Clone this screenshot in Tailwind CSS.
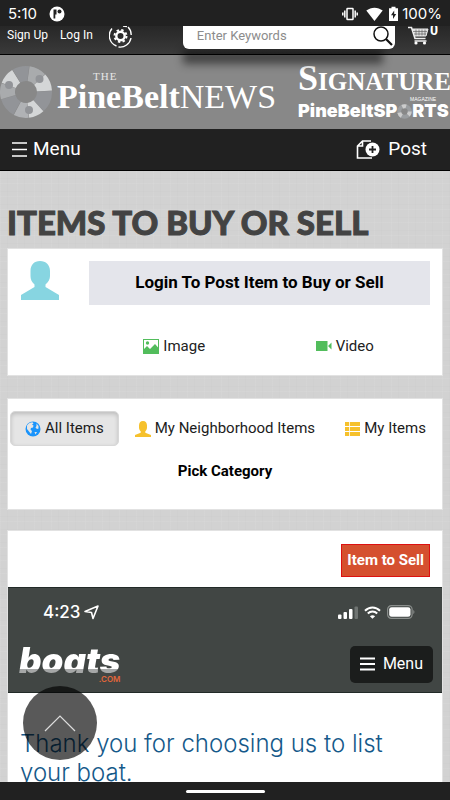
<!DOCTYPE html>
<html lang="en">
<head>
  <meta charset="UTF-8" />
  <meta name="viewport" content="width=device-width, initial-scale=1.0" />
  <title>Items to Buy or Sell</title>
  <script src="https://cdn.jsdelivr.net/npm/@tailwindcss/browser@4"></script>
  <style>
    .linen {
      background-color: #d2d2d2;
      background-image:
        repeating-linear-gradient(0deg, rgba(255, 255, 255, 0.06) 0 1px, transparent 1px 5px, rgba(0, 0, 0, 0.01) 5px 6px, transparent 6px 13px),
        repeating-linear-gradient(90deg, rgba(255, 255, 255, 0.06) 0 1px, transparent 1px 7px, rgba(0, 0, 0, 0.01) 7px 8px, transparent 8px 17px);
    }
  </style>
</head>
<body class="h-screen flex flex-col overflow-hidden bg-[#212121] font-[Roboto,sans-serif] text-black">

  <!-- Status bar -->
  <div class="h-[26px] shrink-0 flex items-center justify-between pl-2 pr-2 pt-[2px] bg-[#212121] text-white text-[15px] font-[Inter,sans-serif] z-20">
    <div class="flex items-center gap-3">
      <span>5:10</span>
      <svg class="w-4 h-4" viewBox="0 0 16 16">
        <circle cx="8" cy="8" r="7.500" fill="#fff" />
        <path d="M4.500 3.500h3v5H6.300v4H4.500z" fill="#212121" />
        <circle cx="10.500" cy="5.500" r="2" fill="#212121" />
      </svg>
    </div>
    <div class="flex items-center">
      <svg class="w-4 h-4 mr-2" viewBox="0 0 16 16" fill="none" stroke="#fff" stroke-width="1.500">
        <rect x="5" y="2.500" width="6" height="11" rx="0.500" />
        <path d="M2.800 4.500v7M13.200 4.500v7M0.800 6.500v3M15.200 6.500v3" />
      </svg>
      <svg class="w-[17px] h-4 mr-[6px]" viewBox="0 0 17 16" fill="#fff"><path d="M8.500 15L0.300 4.600C5 .7 12 .7 16.700 4.600z" /></svg>
      <svg class="w-[9px] h-4 mr-1" viewBox="0 0 9 16">
        <path d="M2.500 0.800h4v1.500H9V15H0V2.300h2.500z" fill="#fff" />
        <path d="M5.200 4.500L2 9.300h2V13l3.200-5H5.200z" fill="#212121" />
      </svg>
      <span>100%</span>
    </div>
  </div>

  <!-- Account bar, partly scrolled away -->
  <header class="h-[29px] shrink-0 flex items-start relative z-10 pl-[7px] border-b border-black bg-linear-to-b from-[#272727] to-[#3a3a3a] text-white text-[12px]">
    <nav class="flex items-start gap-3">
      <a href="#" class="leading-[18px]">Sign Up</a>
      <a href="#" class="leading-[18px]">Log In</a>
      <a href="#" aria-label="Settings" class="ml-1 h-[22px] overflow-hidden">
        <svg class="w-[23px] h-[22px]" viewBox="0 0 23 22" fill="none" stroke="#fff">
          <path d="M7.500 20A11 11 0 0 1 3 2.500M9.500 21A11 11 0 0 0 22 12M22.200 9A11 11 0 0 0 19 1M14 0l4 .500" stroke-width="1.400" />
          <circle cx="11.500" cy="10" r="4.200" stroke-width="2.400" />
          <circle cx="11.500" cy="10" r="6" stroke-width="2" stroke-dasharray="2.360 2.360" />
        </svg>
      </a>
    </nav>
    <form class="relative flex-1 ml-[51px] mr-3">
      <div class="absolute left-0 right-3 top-6 h-3.5 bg-black/50 blur-[4px]"></div>
      <div class="relative h-[23px] flex items-start overflow-hidden bg-white rounded-b-md">
        <input type="text" aria-label="Search" placeholder="Enter Keywords" class="flex-1 min-w-0 h-[19px] pl-[14px] text-[13px] text-black placeholder-[#8c8c8c] outline-none" />
        <button type="button" aria-label="Search" class="pr-0.5">
          <svg class="w-5 h-[21px]" viewBox="0 0 20 21" fill="none" stroke="#111">
            <circle cx="8" cy="8" r="7" stroke-width="1.500" />
            <path d="M13 13l6 6" stroke-width="2.200" />
          </svg>
        </button>
      </div>
    </form>
    <a href="#" aria-label="Cart" class="flex items-start h-5 mr-3 overflow-hidden">
      <svg class="w-[23px] h-[19px]" viewBox="0 0 23 19" fill="none" stroke="#eee">
        <path d="M1 1.500h3.500L8 12.500H18.500M7.500 15h12" stroke-width="1.600" />
        <path d="M5.500 3H21l-2 7H8z" fill="#ddd" stroke-width="1" />
        <path d="M9 3.500v6M12 3.500v6M15 3.500v6M18 3.500v6M6 5.500h14M7 8h12" stroke="#555" stroke-width="0.600" />
        <circle cx="9" cy="17" r="1.600" fill="#fff" stroke="none" />
        <circle cx="17.500" cy="17" r="1.600" fill="#fff" stroke="none" />
      </svg>
      <span class="-mt-0.5 leading-3 text-[14px] font-bold">0</span>
    </a>
  </header>

  <!-- Publications -->
  <div class="h-[74px] shrink-0 flex items-center bg-[#888] text-white overflow-hidden whitespace-nowrap">
    <svg class="w-[52px] h-[54px] shrink-0" viewBox="-26 -27 52 54" fill="none" stroke-width="15">
      <circle r="18.500" pathLength="360" stroke="#a9abad" stroke-dasharray="39 321" transform="rotate(-82)" />
      <circle r="18.500" pathLength="360" stroke="#d4d6d7" stroke-dasharray="39 321" transform="rotate(-42)" />
      <circle r="18.500" pathLength="360" stroke="#929498" stroke-dasharray="49 311" transform="rotate(-2)" />
      <circle r="18.500" pathLength="360" stroke="#d4d6d7" stroke-dasharray="35 325" transform="rotate(48)" />
      <circle r="18.500" pathLength="360" stroke="#b0b2b5" stroke-dasharray="34 326" transform="rotate(84)" />
      <circle r="18.500" pathLength="360" stroke="#929498" stroke-dasharray="44 316" transform="rotate(119)" />
      <circle r="18.500" pathLength="360" stroke="#a9abad" stroke-dasharray="36 324" transform="rotate(164)" />
      <circle r="18.500" pathLength="360" stroke="#d4d6d7" stroke-dasharray="37 323" transform="rotate(201)" />
      <circle r="18.500" pathLength="360" stroke="#929498" stroke-dasharray="38 322" transform="rotate(239)" />
      <g stroke="none">
        <circle cx="13.500" cy="-13" r="4" fill="#929498" />
        <circle cx="3" cy="18" r="4" fill="#929498" />
        <circle cx="-17" cy="-7" r="4" fill="#929498" />
      </g>
    </svg>
    <a href="#" class="shrink-0 ml-[5px] w-[217px] font-['Liberation_Serif',serif]">
      <span class="block pl-9 text-[11px] leading-[10px] tracking-widest text-white/80">THE</span>
      <span class="block text-[34px] leading-8"><b>PineBelt</b>NEWS</span>
    </a>
    <div class="shrink-0 ml-6">
      <a href="#" class="block font-['Liberation_Serif',serif] font-bold">
        <span class="block text-[25px] leading-7"><span class="text-[36px] leading-7">S</span>IGNATURE</span>
        <span class="block pl-28 font-['Liberation_Sans',sans-serif] text-[5px] leading-[6px] font-normal">MAGAZINE</span>
      </a>
      <a href="#" class="flex items-center font-[Inter,sans-serif] font-black text-[18px] leading-[18px]">PineBeltSP
        <svg class="w-[15px] h-[15px]" viewBox="0 0 15 15" fill="none" stroke-width="4">
          <circle cx="7.500" cy="7.500" r="5.300" stroke="#9a9da0" />
          <circle cx="7.500" cy="7.500" r="5.300" stroke="#ccc" stroke-dasharray="4 7" />
        </svg>RTS
      </a>
    </div>
  </div>

  <!-- Main menu -->
  <nav class="h-[42px] shrink-0 flex items-center justify-between pl-3 pr-[23px] bg-[#212121] border-b border-black text-white text-[19px]">
    <button type="button" class="flex items-center gap-1.5">
      <svg class="w-[15px] h-[15px]" viewBox="0 0 15 15" stroke="#fff" stroke-width="1.300"><path d="M0 1h15M0 7.500h15M0 14h15" /></svg>
      Menu
    </button>
    <a href="#" class="flex items-center gap-2">
      <svg class="w-6 h-5" viewBox="0 0 24 20">
        <path d="M15 1H6.500L1.500 6v12h14.500M6.500 1v5H1.500" fill="none" stroke="#fff" stroke-width="1.600" />
        <circle cx="16.500" cy="9.500" r="7" fill="#fff" />
        <path d="M16.500 6v7M13 9.500h7" stroke="#212121" stroke-width="1.800" />
      </svg>
      Post
    </a>
  </nav>

  <main class="linen flex-1 min-h-0 overflow-hidden px-[7px] pt-[31px]">
    <h1 class="font-[Lato,sans-serif] font-black text-[33px] leading-10 mb-[6px] text-[#434343] [-webkit-text-stroke:1px_#434343] whitespace-nowrap">ITEMS TO BUY OR SELL</h1>

    <section class="bg-white border border-[#e2e2e2] pt-3 pb-[19px] pl-[13px] pr-3 mb-[22px]">
      <div class="flex items-start">
        <svg class="w-[38px] h-[39px] shrink-0" viewBox="0 0 38 39" fill="#87d5e1"><path d="M19 0C13 0 9.500 4 9.500 10v5c0 3 1 6 4 8.500v2.500L0 34v5h38v-5l-13.500-8v-2.500c3-2.500 4.500-5.500 4.500-8.500v-5C29 4 25 0 19 0z" /></svg>
        <a href="#" class="ml-[30px] flex-1 h-11 flex items-center justify-center bg-[#e4e5eb] text-[17px] font-bold">Login To Post Item to Buy or Sell</a>
      </div>
      <div class="ml-[68px] mt-[31px] grid grid-cols-2 text-[15px] leading-5">
        <button type="button" class="flex items-center justify-center gap-1 text-[#222]">
          <svg class="w-4 h-[15px]" viewBox="0 0 16 15">
            <rect x="0.500" y="0.500" width="15" height="14" fill="#fff" stroke="#52bd5c" />
            <path d="M1 10l3-3 3 3 5-5 3.500 4v5H1z" fill="#52bd5c" />
            <circle cx="4.500" cy="4" r="1.700" fill="#52bd5c" />
          </svg>
          Image
        </button>
        <button type="button" class="flex items-center justify-center gap-1 text-[#222]">
          <svg class="w-4 h-3" viewBox="0 0 16 12" fill="#52bd5c"><path d="M0 1h11.500v10H0zM12 6l3.500-3.500v7z" /></svg>
          Video
        </button>
      </div>
    </section>

    <section class="bg-white border border-[#e2e2e2] pt-3 pb-7 px-0.5 mb-5">
      <div class="flex justify-between text-[15px] text-[#1c1c1c] whitespace-nowrap">
        <button type="button" class="h-[35px] px-[14px] flex items-center gap-1 rounded-[5px] bg-[#e5e5e5] border border-[#d8d8d8] shadow-[inset_0_2px_4px_rgba(0,0,0,0.18)]">
          <svg class="w-4 h-4" viewBox="0 0 16 16">
            <circle cx="8" cy="8" r="7.500" fill="#1a94fb" />
            <path d="M2 4.500C3.500 2 5.500 1.200 7.500 1.200L8.500 2.500 7 3.500l1.500 1L8 6.500 6 7l-.5 1.500L7 10l-1 3L4 10.500 2 8zM11.500 2.500l2 2.500v2.500l-1.500.5-1.500-1.500 1-1.500zM9.500 11l2.500 0-1.500 2.500z" fill="#e5e5e5" />
          </svg>
          All Items
        </button>
        <button type="button" class="h-[35px] px-[14px] flex items-center gap-1">
          <svg class="w-4 h-4" viewBox="0 0 16 16" fill="#f6c12c"><path d="M8 0C5.300 0 4 2 4 4.500v2c0 1.500.5 2.700 1.700 3.800v1.500L0 14v2h16v-2l-5.700-2.200v-1.500C11.500 9.200 12 8 12 6.500v-2C12 2 10.700 0 8 0z" /></svg>
          My Neighborhood Items
        </button>
        <button type="button" class="h-[35px] px-[14px] flex items-center gap-1">
          <svg class="w-[15px] h-[14px]" viewBox="0 0 15 14" fill="#f6c12c"><path d="M0 0h4.200v4H0zM5 0h10v4H5zM0 5h4.200v4H0zM5 5h10v4H5zM0 10h4.200v4H0zM5 10h10v4H5z" /></svg>
          My Items
        </button>
      </div>
      <h2 class="mt-[15px] text-center text-[15px] leading-5 font-bold">Pick Category</h2>
    </section>

    <article class="bg-white border border-[#e2e2e2]">
      <div class="flex justify-end pt-[13px] pb-[10px] pr-3">
        <a href="#" class="h-[33px] px-[5px] flex items-center bg-[#d5502f] border border-[#dd1111] text-white text-[15px] font-bold">Item to Sell</a>
      </div>
      <div class="h-[106px] flex flex-col justify-between bg-[#414644] border-y border-[#222a28] text-white pl-[11px] pr-[9px] pt-[14px] pb-[9px]">
        <div class="flex items-center justify-between pl-6 pr-[18px] font-[Inter,sans-serif] text-[17px] leading-5 font-medium">
          <div class="flex items-center gap-1">
            <span>4:23</span>
            <svg class="w-[15px] h-[15px]" viewBox="0 0 15 15" fill="none" stroke="#fff" stroke-width="1.600" stroke-linejoin="round"><path d="M14 1L9 13.500 7.500 7.500 1 6.500z" /></svg>
          </div>
          <div class="flex items-center gap-[6px]">
            <svg class="w-5 h-[13px]" viewBox="0 0 20 13" fill="#fff">
              <rect y="8.500" width="3.500" height="4.500" rx="1" /><rect x="5.500" y="6" width="3.500" height="7" rx="1" /><rect x="11" y="3" width="3.500" height="10" rx="1" />
              <rect x="16.500" y="0.500" width="3.500" height="12.500" rx="1" fill="#6f7472" />
            </svg>
            <svg class="w-[17px] h-[13px]" viewBox="0 0 17 13">
              <path d="M1 4.700C5.300.4 11.700.4 16 4.700M3.800 7.500c2.700-2.700 6.700-2.700 9.400 0" fill="none" stroke="#fff" stroke-width="2" />
              <path d="M8.500 12.800L5.900 10.200c1.500-1.400 3.700-1.400 5.200 0z" fill="#fff" />
            </svg>
            <svg class="w-7 h-[14px]" viewBox="0 0 28 14">
              <rect x="0.600" y="0.600" width="24.500" height="12.800" rx="3.800" fill="none" stroke="#8a8e8c" stroke-width="1.200" />
              <rect x="2.200" y="2.200" width="21.300" height="9.600" rx="2.400" fill="#fff" />
              <path d="M26.300 5v4c1.500-.7 1.500-3.300 0-4z" fill="#8a8e8c" />
            </svg>
          </div>
        </div>
        <div class="flex items-center justify-between">
          <a href="#" class="block font-[Inter,sans-serif]">
            <span class="block pr-1 font-black italic text-[35px] leading-[30px] bg-clip-text text-transparent bg-linear-to-b from-white from-80% to-[#a5a7a7] to-80%">boats</span>
            <span class="block pr-1 text-right text-[8px] leading-2 font-semibold text-[#e0653a]">.COM</span>
          </a>
          <button type="button" class="h-[37px] px-[10px] flex items-center gap-2 rounded-[5px] bg-[#1b1d1c] text-[16px]">
            <svg class="w-[15px] h-[14px]" viewBox="0 0 15 14" stroke="#fff" stroke-width="2"><path d="M0 1.500h15M0 7h15M0 12.500h15" /></svg>
            Menu
          </button>
        </div>
      </div>
      <p class="pl-3 pt-9 font-[Inter,sans-serif] font-light text-[24px] leading-[29px] text-[#15598a]">Thank you for choosing us to list<br />your boat.</p>
    </article>
  </main>

  <button type="button" aria-label="Back to top" class="fixed left-[23px] bottom-10 w-[74px] h-[74px] rounded-full flex items-center justify-center bg-black/65">
    <svg class="w-8 h-[17px]" viewBox="0 0 32 17" fill="none" stroke="#ddd" stroke-width="1.200"><path d="M1 16L16 1l15 15" /></svg>
  </button>

  <!-- Gesture bar -->
  <div class="h-[18px] shrink-0 flex items-center justify-center bg-[#212121]">
    <div class="w-[79px] h-[3px] rounded-full bg-white"></div>
  </div>
</body>
</html>
